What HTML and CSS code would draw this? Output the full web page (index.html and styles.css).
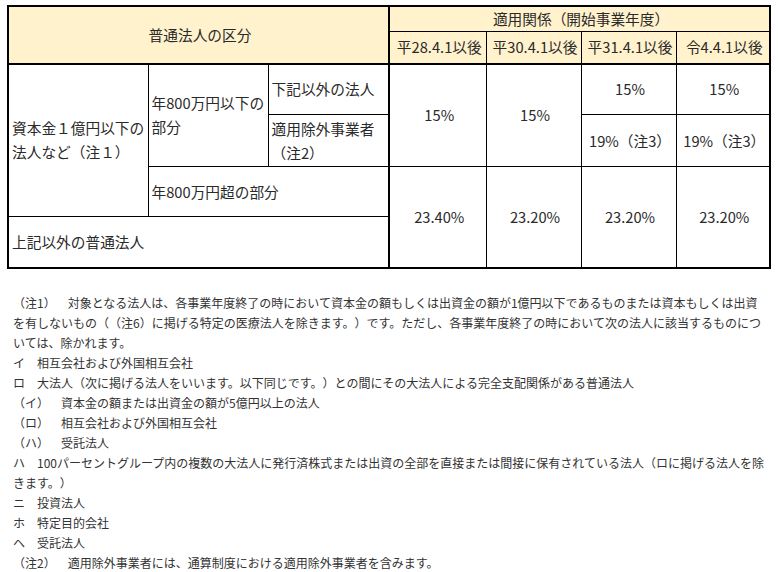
FILE: index.html
```html
<!DOCTYPE html>
<html lang="ja">
<head>
<meta charset="utf-8">
<title>普通法人の税率</title>
<link rel="stylesheet" href="styles.css">
</head>
<body>
<div class="page">
  <table class="rate-table">
    <colgroup>
      <col class="c-a"><col class="c-b"><col class="c-c"><col class="c-d"><col class="c-e"><col class="c-f"><col class="c-g">
    </colgroup>
    <thead>
      <tr class="r1">
        <th colspan="3" rowspan="2" class="split head-bottom">普通法人の区分</th>
        <th colspan="4">適用関係（開始事業年度）</th>
      </tr>
      <tr class="r2">
        <th class="head-bottom">平28.4.1以後</th>
        <th class="head-bottom">平30.4.1以後</th>
        <th class="head-bottom">平31.4.1以後</th>
        <th class="head-bottom">令4.4.1以後</th>
      </tr>
    </thead>
    <tbody>
      <tr class="r3">
        <td rowspan="3" class="left">資本金１億円以下の<br>法人など（注１）</td>
        <td rowspan="2" class="left">年800万円以下の<br>部分</td>
        <td class="left split">下記以外の法人</td>
        <td rowspan="2">15%</td>
        <td rowspan="2">15%</td>
        <td>15%</td>
        <td>15%</td>
      </tr>
      <tr class="r4">
        <td class="left split">適用除外事業者<br>（注2）</td>
        <td>19%（注3）</td>
        <td>19%（注3）</td>
      </tr>
      <tr class="r5">
        <td colspan="2" class="left split">年800万円超の部分</td>
        <td rowspan="2">23.40%</td>
        <td rowspan="2">23.20%</td>
        <td rowspan="2">23.20%</td>
        <td rowspan="2">23.20%</td>
      </tr>
      <tr class="r6">
        <td colspan="3" class="left split">上記以外の普通法人</td>
      </tr>
    </tbody>
  </table>

  <div class="notes">
    <p>（注1）　対象となる法人は、各事業年度終了の時において資本金の額もしくは出資金の額が1億円以下であるものまたは資本もしくは出資を有しないもの（（注6）に掲げる特定の医療法人を除きます。）です。ただし、各事業年度終了の時において次の法人に該当するものについては、除かれます。</p>
    <p>イ　相互会社および外国相互会社</p>
    <p>ロ　大法人（次に掲げる法人をいいます。以下同じです。）との間にその大法人による完全支配関係がある普通法人</p>
    <p>（イ）　資本金の額または出資金の額が5億円以上の法人</p>
    <p>（ロ）　相互会社および外国相互会社</p>
    <p>（ハ）　受託法人</p>
    <p>ハ　100パーセントグループ内の複数の大法人に発行済株式または出資の全部を直接または間接に保有されている法人（ロに掲げる法人を除きます。）</p>
    <p>ニ　投資法人</p>
    <p>ホ　特定目的会社</p>
    <p>ヘ　受託法人</p>
    <p>（注2）　適用除外事業者には、通算制度における適用除外事業者を含みます。</p>
  </div>
</div>
</body>
</html>
```

FILE: styles.css
```css
html, body {
  margin: 0;
  padding: 0;
  background: #ffffff;
}

body {
  font-family: "Noto Sans CJK JP", "Noto Sans", sans-serif;
  color: #2a2a2a;
  text-spacing-trim: space-all;
}

.page {
  padding: 5px 0 0 7px;
}

.rate-table {
  border-collapse: collapse;
  table-layout: fixed;
  width: 762px;
  border: 2px solid #000;
  font-size: 14.7px;
  line-height: 24px;
}

.c-a { width: 140px; }
.c-b { width: 120px; }
.c-c { width: 121px; }
.c-d { width: 97px; }
.c-e { width: 95px; }
.c-f { width: 95px; }
.c-g { width: 94px; }

.rate-table th,
.rate-table td {
  border: 1px solid #000;
  padding: 0 0 0 3px;
  text-align: center;
  vertical-align: middle;
  font-weight: normal;
  white-space: nowrap;
  overflow: hidden;
}

.rate-table th {
  background: #fff2cc;
}

.rate-table td.left {
  text-align: left;
}

.rate-table .split {
  border-right: 2px solid #000;
}

.rate-table .head-bottom {
  border-bottom: 2px solid #000;
}

.r1 { height: 24px; }
.r2 { height: 32px; }
.r3 { height: 51px; }
.r4 { height: 52px; }
.r5 { height: 50px; }
.r6 { height: 51px; }

.notes {
  margin: 24px 0 0 6px;
  width: 753px;
  font-size: 12px;
  line-height: 20px;
  color: #333;
}

.notes p {
  margin: 0;
}
```
